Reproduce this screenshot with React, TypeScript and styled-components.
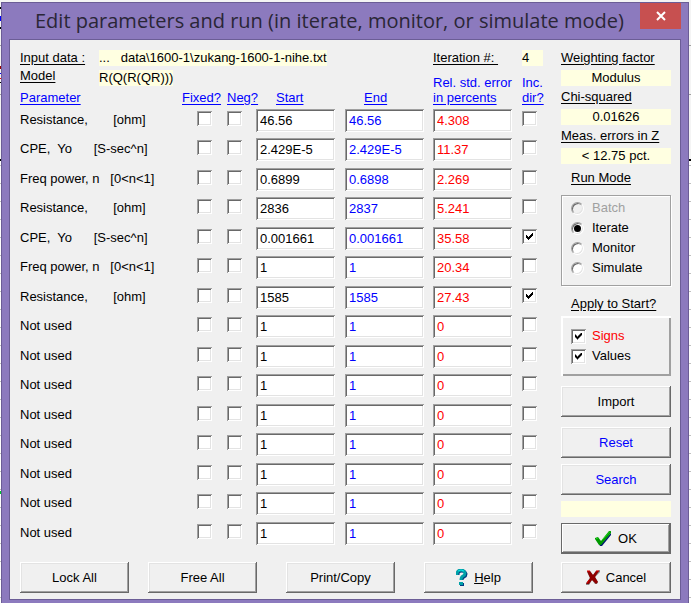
import React, { useState } from "react";
import styled, { createGlobalStyle, css } from "styled-components";

const GlobalStyle = createGlobalStyle`
  *, *::before, *::after { box-sizing: border-box; }
  body {
    margin: 0;
    font: 13px/16px "Liberation Sans", Arial, sans-serif;
    color: #000;
  }
  button, input { font: inherit; color: inherit; margin: 0; }
`;

const sunken = css`
  border: 0;
  box-shadow: inset 1px 1px #a0a0a0, inset -1px -1px #fff,
    inset 2px 2px #696969, inset -2px -2px #e3e3e3;
`;

const Desktop = styled.div`
  display: flex;
  min-height: 100vh;
  padding: 2px 2px 0 1px;
  background:
    linear-gradient(#000, #000) 0 7px / 1px 2px no-repeat,
    linear-gradient(#00f, #00f) 0 16px / 1px 5px no-repeat,
    linear-gradient(#000, #000) 0 27px / 1px 2px no-repeat,
    linear-gradient(#900, #900) 0 66px / 1px 3px no-repeat,
    linear-gradient(#00f, #00f) 0 73px / 1px 1px no-repeat,
    linear-gradient(#f00, #f00) 0 78px / 1px 1px no-repeat,
    linear-gradient(#000, #000) 0 82px / 1px 1px no-repeat,
    linear-gradient(#0c3, #0c3) 0 491px / 1px 3px no-repeat,
    linear-gradient(#000, #000) 0 159px / 100% 2px no-repeat,
    linear-gradient(#a0a0a0, #a0a0a0) 0 45px / 100% 1px no-repeat,
    linear-gradient(#a0a0a0, #a0a0a0) 0 94px / 100% 1px no-repeat,
    linear-gradient(#f4f4f4, #f4f4f4) 0 0 / 100% 159px no-repeat,
    repeating-linear-gradient(#fff 0 3px, #c0c0c0 3px 4px, #fff 4px 18px);
`;

const Dialog = styled.main`
  flex: 1;
  display: flex;
  flex-direction: column;
  border: 1px solid #6b5d96;
  border-bottom: 0;
  padding: 0 7px 3px;
  background: #8c7abe;
`;

const TitleBar = styled.header`
  display: flex;
  align-items: flex-start;
  justify-content: space-between;
  height: 36px;
  padding-left: 26px;
`;

const Title = styled.h1`
  margin: 0;
  font: 20px/36px "Open Sans", "Noto Sans", sans-serif;
  color: #2a2636;
  white-space: nowrap;
`;

const CloseButton = styled.button`
  display: grid;
  place-items: center;
  width: 41px;
  height: 26px;
  padding: 0;
  border: 0;
  background: #c75050;
`;

const Client = styled.div`
  flex: 1;
  display: grid;
  grid-template-columns: 1fr 110px;
  column-gap: 20px;
  border: 1px solid #6b5d96;
  padding: 10px 9px 6px 10px;
  background: #f0f0f0;
`;

const MainPane = styled.section`
  display: flex;
  flex-direction: column;
  min-width: 0;
`;

const Info = styled.div`
  display: grid;
  grid-template-columns: 79px 1fr 89px 19px;
  align-items: start;
  white-space: pre;
`;

const InfoStack = styled.div<{ $gap: number }>`
  display: flex;
  flex-direction: column;
  align-items: flex-start;
  gap: ${(p) => p.$gap}px;
`;

const Caption = styled.span<{ $indent?: boolean }>`
  margin-left: ${(p) => (p.$indent ? 10 : 0)}px;
  text-decoration: underline;
  text-underline-offset: 2px;
  white-space: pre;
`;

const Readout = styled.output<{ $wide?: boolean }>`
  display: block;
  min-width: 21px;
  min-height: 16px;
  background: #ffffe1;
  ${(p) => p.$wide && "text-align: center;"}
`;

const Table = styled.table`
  width: 100%;
  margin-top: -12px;
  table-layout: fixed;
  border-collapse: collapse;
`;

const Col = styled.col<{ $width?: number }>`
  width: ${(p) => (p.$width ? `${p.$width}px` : "auto")};
`;

const Head = styled.th<{ $indent?: number }>`
  height: 35px;
  padding: 0 0 4px ${(p) => p.$indent ?? 0}px;
  vertical-align: bottom;
  text-align: left;
  font-weight: normal;
  line-height: 15px;
  color: #00f;
  white-space: nowrap;
`;

const Row = styled.tr`
  height: 30px;
  &:nth-child(odd) { height: 29px; }
`;

const NameCell = styled.th`
  padding: 3px 0 0;
  vertical-align: top;
  text-align: left;
  font-weight: normal;
  white-space: pre;
`;

const Cell = styled.td<{ $indent?: number }>`
  padding: 0 0 0 ${(p) => p.$indent ?? 0}px;
  vertical-align: top;
`;

const ValueInput = styled.input`
  ${sunken}
  display: block;
  width: 79px;
  height: 23px;
  padding: 2px 3px 2px 4px;
  background: #fff;
  color: ${(p) => p.color};
`;

const Check = styled.input.attrs({ type: "checkbox" })<{ $inTable?: boolean }>`
  ${sunken}
  appearance: none;
  display: block;
  width: 15px;
  height: 15px;
  margin-top: ${(p) => (p.$inTable ? 2 : 0)}px;
  padding: 4px;
  background: #fff;
  &:checked::before {
    content: "";
    display: block;
    width: 7px;
    height: 7px;
    background: #000;
    clip-path: polygon(0 2px, 1px 2px, 1px 3px, 2px 3px, 2px 4px, 3px 4px, 3px 3px, 4px 3px, 4px 2px, 5px 2px, 5px 1px, 6px 1px, 6px 0, 7px 0, 7px 3px, 6px 3px, 6px 4px, 5px 4px, 5px 5px, 4px 5px, 4px 6px, 3px 6px, 3px 7px, 2px 7px, 2px 6px, 1px 6px, 1px 5px, 0 5px);
  }
`;

const Radio = styled.input.attrs({ type: "radio" })`
  appearance: none;
  display: grid;
  place-items: center;
  width: 13px;
  height: 13px;
  border: 1px solid;
  border-color: #a0a0a0 #fff #fff #a0a0a0;
  border-radius: 50%;
  background: #fff;
  box-shadow: inset 1px 1px #696969, inset -1px -1px #e3e3e3;
  &:disabled { background: #f0f0f0; }
  &:checked::before {
    content: "";
    width: 7px;
    height: 7px;
    border-radius: 50%;
    background: #000;
  }
`;

const ButtonBar = styled.div`
  display: grid;
  grid-template-columns: 128fr 138fr 138fr 117fr;
  margin-top: auto;
`;

const Button = styled.button<{ $tone?: string; $primary?: boolean }>`
  display: flex;
  align-items: center;
  justify-content: center;
  gap: 6px;
  width: 109px;
  height: 31px;
  padding: 0;
  border: 0;
  background: #f0f0f0;
  color: ${(p) => p.$tone ?? "#000"};
  box-shadow: ${(p) =>
    p.$primary
      ? "inset 0 0 0 1px #696969, inset -2px -2px #696969, inset 2px 2px #fff, inset -3px -3px #a0a0a0"
      : "inset -1px -1px #696969, inset 1px 1px #fff, inset -2px -2px #a0a0a0, inset 2px 2px #e3e3e3"};
`;

const SidePane = styled.aside`
  display: flex;
  flex-direction: column;
  ${Button} { width: 100%; }
`;

const Stat = styled.div`
  display: flex;
  flex-direction: column;
  gap: 4px;
  margin-bottom: 3px;
  white-space: nowrap;
`;

const Group = styled.section<{ $top: number; $gap: number }>`
  display: flex;
  flex-direction: column;
  gap: ${(p) => p.$gap}px;
  margin-top: ${(p) => p.$top}px;
`;

const EtchedBox = styled.div`
  display: flex;
  flex-direction: column;
  gap: 4px;
  padding: 5px 10px 10px;
  box-shadow: inset 0 0 0 1px #a0a0a0, inset 2px 2px #fff, 1px 1px #fff;
`;

const RaisedBox = styled.div`
  display: flex;
  flex-direction: column;
  gap: 4px;
  padding: 12px 10px;
  box-shadow: inset 2px 2px #fff, inset -2px -2px #a0a0a0;
`;

const Option = styled.label<{ $tone?: string }>`
  display: grid;
  grid-template-columns: 15px 1fr;
  align-items: center;
  column-gap: 6px;
  height: 16px;
  color: ${(p) => p.$tone ?? "#000"};
`;

const Actions = styled.div`
  display: flex;
  flex-direction: column;
  gap: 6px;
  margin-top: 10px;
`;

const CancelSlot = styled.div`
  margin-top: auto;
`;

type Param = {
  name: string;
  start: string;
  end: string;
  error: string;
  inc?: boolean;
};

const resistance = "Resistance,       [ohm]";
const cpe = "CPE,  Yo      [S-sec^n]";
const power = "Freq power, n   [0<n<1]";

const params: Param[] = [
  { name: resistance, start: "46.56", end: "46.56", error: "4.308" },
  { name: cpe, start: "2.429E-5", end: "2.429E-5", error: "11.37" },
  { name: power, start: "0.6899", end: "0.6898", error: "2.269" },
  { name: resistance, start: "2836", end: "2837", error: "5.241" },
  { name: cpe, start: "0.001661", end: "0.001661", error: "35.58", inc: true },
  { name: power, start: "1", end: "1", error: "20.34" },
  { name: resistance, start: "1585", end: "1585", error: "27.43", inc: true },
  ...Array.from({ length: 8 }, () => ({
    name: "Not used",
    start: "1",
    end: "1",
    error: "0",
  })),
];

const stats = [
  ["Weighting factor", "Modulus"],
  ["Chi-squared", "0.01626"],
  ["Meas. errors in Z", "< 12.75 pct."],
];

const modes = ["Batch", "Iterate", "Monitor", "Simulate"];

const TickIcon = () => (
  <svg width="17" height="16" viewBox="0 0 17 16" aria-hidden="true">
    <path d="M1 8l4 7h2l9-11V2L6 13z" fill="#001a70" />
    <path d="M0 7l3-1 3 4L14 0h2v2L6 14H4L0 8z" fill="#009a00" />
    <path d="M1 7.500l2-.5M7 9l8-8.500" stroke="#20d820" fill="none" />
  </svg>
);

const CrossIcon = () => (
  <svg width="14" height="15" viewBox="0 0 14 15" aria-hidden="true">
    <path d="M1 2l3-1 3 4 3-4 4-1v2L9 7l3 5-1 2H9l-3-4-3 5H0v-2l4-5z" fill="#000" opacity=".45" />
    <path d="M1 1h3l3 4 3-4h3L9 7l3 5-2 2-4-4-3 4H0l4-6z" fill="#900000" />
    <path d="M1 1h3M10 1h3M1 13l2-3" stroke="#e00000" />
  </svg>
);

const HelpIcon = () => (
  <svg width="12" height="17" viewBox="0 0 12 17" aria-hidden="true">
    <path d="M2 6V4q1-2 4-2t4 3q0 2-2 3-2 1-2 3" stroke="#003a80" strokeWidth="3" fill="none" />
    <path d="M1 6V4q1-3 4-3t4 3q0 2-2 3-2 1-2 4" stroke="#00a0a8" strokeWidth="3" fill="none" />
    <path d="M2 2q3-2 6 0" stroke="#00e5e5" fill="none" />
    <path d="M4 14h4v3H4z" fill="#003a80" />
    <path d="M3 13h4v3H3z" fill="#00a0a8" />
  </svg>
);

export default function App() {
  const [mode, setMode] = useState("Iterate");

  return (
    <>
      <GlobalStyle />
      <Desktop>
        <Dialog>
          <TitleBar>
            <Title>Edit parameters and run (in iterate, monitor, or simulate mode)</Title>
            <CloseButton type="button" aria-label="Close">
              <svg width="12" height="10" viewBox="0 0 12 10" aria-hidden="true">
                <path d="M2 1l8 8M10 1L2 9" stroke="#fff" strokeWidth="2" />
              </svg>
            </CloseButton>
          </TitleBar>
          <Client>
            <MainPane>
              <Info>
                <InfoStack $gap={2}>
                  <Caption>Input data :</Caption>
                  <Caption>Model</Caption>
                </InfoStack>
                <InfoStack $gap={4}>
                  <Readout>{"...   data\\1600-1\\zukang-1600-1-nihe.txt"}</Readout>
                  <Readout>R(Q(R(QR)))</Readout>
                </InfoStack>
                <Caption>{"Iteration #: "}</Caption>
                <Readout>4</Readout>
              </Info>
              <Table>
                <colgroup>
                  <Col />
                  <Col $width={45} />
                  <Col $width={29} />
                  <Col $width={89} />
                  <Col $width={88} />
                  <Col $width={89} />
                  <Col $width={19} />
                </colgroup>
                <thead>
                  <tr>
                    <Head scope="col"><Caption>Parameter</Caption></Head>
                    <Head scope="col"><Caption>Fixed?</Caption></Head>
                    <Head scope="col"><Caption>Neg?</Caption></Head>
                    <Head scope="col" $indent={20}><Caption>Start</Caption></Head>
                    <Head scope="col" $indent={19}><Caption>End</Caption></Head>
                    <Head scope="col">Rel. std. error<br /><Caption>in percents</Caption></Head>
                    <Head scope="col">Inc.<br /><Caption>dir?</Caption></Head>
                  </tr>
                </thead>
                <tbody>
                  {params.map((p, i) => (
                    <Row key={i}>
                      <NameCell scope="row">{p.name}</NameCell>
                      <Cell $indent={15}><Check $inTable aria-label={`Fixed, row ${i + 1}`} /></Cell>
                      <Cell><Check $inTable aria-label={`Negative, row ${i + 1}`} /></Cell>
                      <Cell><ValueInput color="#000" defaultValue={p.start} aria-label={`Start, row ${i + 1}`} /></Cell>
                      <Cell><ValueInput color="#00f" defaultValue={p.end} aria-label={`End, row ${i + 1}`} /></Cell>
                      <Cell><ValueInput color="#f00" defaultValue={p.error} aria-label={`Error, row ${i + 1}`} /></Cell>
                      <Cell><Check $inTable defaultChecked={p.inc} aria-label={`Increase direction, row ${i + 1}`} /></Cell>
                    </Row>
                  ))}
                </tbody>
              </Table>
              <ButtonBar>
                <Button type="button">Lock All</Button>
                <Button type="button">Free All</Button>
                <Button type="button">Print/Copy</Button>
                <Button type="button"><HelpIcon /><span><u>H</u>elp</span></Button>
              </ButtonBar>
            </MainPane>
            <SidePane>
              {stats.map(([label, value]) => (
                <Stat key={label}>
                  <Caption>{label}</Caption>
                  <Readout $wide>{value}</Readout>
                </Stat>
              ))}
              <Group $top={3} $gap={9} role="radiogroup" aria-labelledby="run-mode">
                <Caption $indent id="run-mode">Run Mode</Caption>
                <EtchedBox>
                  {modes.map((m) => (
                    <Option key={m} $tone={m === "Batch" ? "#a0a0a0" : undefined}>
                      <Radio
                        name="mode"
                        disabled={m === "Batch"}
                        checked={mode === m}
                        onChange={() => setMode(m)}
                      />
                      {m}
                    </Option>
                  ))}
                </EtchedBox>
              </Group>
              <Group $top={10} $gap={4} role="group" aria-labelledby="apply-start">
                <Caption $indent id="apply-start">Apply to Start?</Caption>
                <RaisedBox>
                  <Option $tone="#f00"><Check defaultChecked />Signs</Option>
                  <Option><Check defaultChecked />Values</Option>
                </RaisedBox>
              </Group>
              <Actions>
                <Button type="button">Import</Button>
              </Actions>
              <Actions>
                <Button type="button" $tone="#00f">Reset</Button>
                <Button type="button" $tone="#00f">Search</Button>
                <Readout $wide aria-label="Status" />
                <Button type="button" $primary><TickIcon />OK</Button>
              </Actions>
              <CancelSlot>
                <Button type="button"><CrossIcon />Cancel</Button>
              </CancelSlot>
            </SidePane>
          </Client>
        </Dialog>
      </Desktop>
    </>
  );
}
